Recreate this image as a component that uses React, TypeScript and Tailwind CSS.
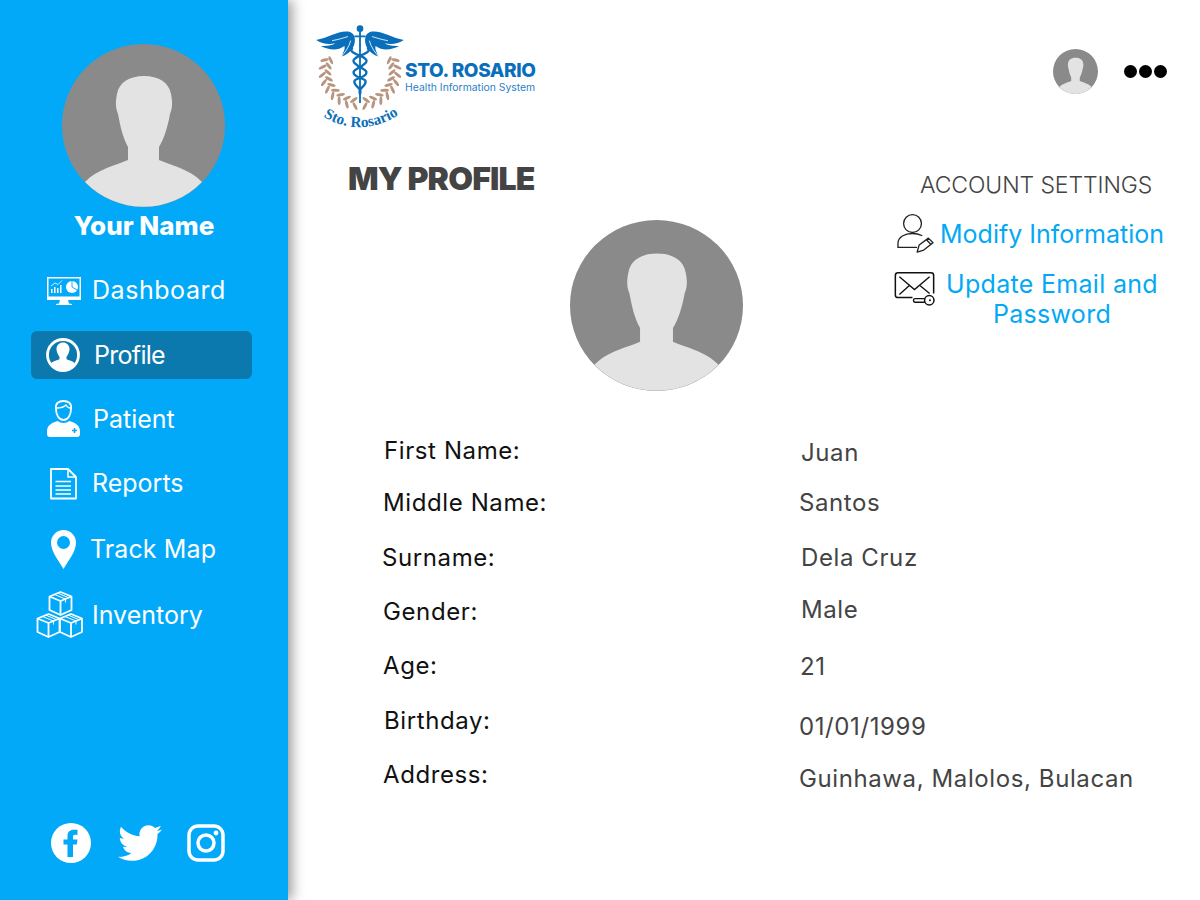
import { FaTwitter } from 'react-icons/fa'

const font = { fontFamily: 'Inter, "Liberation Sans", sans-serif' }

const Avatar = ({ className }: { className: string }) => (
    <svg viewBox="0 0 163 163" preserveAspectRatio="none" className={className}>
        <circle cx="81.5" cy="81.5" r="81.5" fill="#8a8a8a" />
        <path
            d="M23 138C35 125 55 121 66 116L66 103C60 92 58 80 56 70C54 65 53 60 55 50C57 38 68 32 82 32C96 32 107 38 109 50C111 60 110 65 108 70C106 82 102 95 97 103L97 116C108 121 128 125 140 138A81.5 81.5 0 0 1 23 138Z"
            fill="#e3e3e3"
        />
    </svg>
)

const DashboardIcon = () => (
    <svg viewBox="0 0 48 48" className="h-12 w-12 overflow-visible" fill="white">
        <path d="M8 11h34v23H8zM9.500 12.500v18h31v-18z" fillRule="evenodd" />
        <path d="M21 34h8l1 3.500 3 .5v1H17v-1l3-.5z" />
        <path d="M12 27v-4h1.500v4zM15 27v-6h1.500v6zM18 27v-5h1.500v5zM21 27v-8h1.500v8z" />
        <path d="M12 20l4-3 3 1.500 4-4" stroke="white" strokeWidth="0.8" fill="none" />
        <circle cx="33" cy="21" r="6" />
        <path d="M33 21v-6M33 21l5 3" stroke="#03a9f9" strokeWidth="0.9" />
    </svg>
)

const ProfileIcon = () => (
    <svg viewBox="0 0 48 48" className="h-12 w-12">
        <circle cx="24" cy="24" r="15.500" fill="none" stroke="white" strokeWidth="2.800" />
        <path
            d="M11.500 33C14 29.500 19 29.500 20.500 28V26C18.500 23 17.500 20.500 17.500 18C17.500 14 20.500 11.500 24 11.500S30.500 14 30.500 18C30.500 20.500 29.500 23 27.500 26V28C29 29.500 34 29.500 36.500 33C33 37 28.500 39 24 39S15 37 11.500 33Z"
            fill="white"
        />
    </svg>
)

const PatientIcon = () => (
    <svg viewBox="0 0 48 48" className="h-12 w-12">
        <path
            d="M17 14C16 8 20 6 24.500 6S33 8 32 14C32 20 29 25 24.500 25S17 20 17 14Z"
            fill="none"
            stroke="white"
            strokeWidth="1.800"
        />
        <path d="M17.500 13C21 13 25 12 27 10C28 12 30 13 31.500 13" fill="none" stroke="white" strokeWidth="1.300" />
        <path
            d="M19 26C21 28.500 28 28.500 30 26C35 27 41 30 41 36V39C41 41 40 42 38 42H11C9 42 8 41 8 39V36C8 30 14 27 19 26Z"
            fill="white"
        />
        <path d="M33 35.500h5M35.500 33v5" stroke="#03a9f9" strokeWidth="1.500" />
    </svg>
)

const ReportsIcon = () => (
    <svg viewBox="0 0 48 48" className="h-12 w-12" fill="none" stroke="white">
        <path d="M12 10H29L37 18V39.500H12Z" strokeWidth="1.800" strokeLinejoin="round" />
        <path d="M29 10V18H37" strokeWidth="1.500" />
        <path d="M16.500 22.500H32M16.500 27H32M16.500 31H32M16.500 35H32" strokeWidth="1.500" />
    </svg>
)

const PinIcon = () => (
    <svg viewBox="0 0 48 48" className="h-12 w-12">
        <path
            fillRule="evenodd"
            fill="white"
            d="M24.500 44C20 36 12 27 12 17.500A12.500 12.500 0 0 1 37 17.500C37 27 29 36 24.500 44ZM24.500 11A6.500 6.500 0 1 0 24.500 24A6.500 6.500 0 0 0 24.500 11Z"
        />
    </svg>
)

const InventoryIcon = () => (
    <svg viewBox="0 0 48 48" className="h-12 w-12 overflow-visible" fill="none" stroke="white" strokeWidth="1.800" strokeLinejoin="round">
        {[
            [10.500, 0],
            [-1.500, 22],
            [21, 22],
        ].map(([x, y]) => (
            <g key={`${x}-${y}`} transform={`translate(${x} ${y})`}>
                <path d="M0 5.500L11 1L22 5.500V19L11 24L0 19Z" fill="#03a9f9" />
                <path d="M0 5.500L11 10L22 5.500M11 10V24" />
                <path d="M5 3.500L16 8V11.500M8 2L18.500 6.500" strokeWidth="1" />
            </g>
        ))}
    </svg>
)

const navItems = [
    { label: 'Dashboard', icon: <DashboardIcon />, row: 'mt-0', text: 'ml-[5px] tracking-[0.55px]' },
    { label: 'Profile', icon: <ProfileIcon />, row: 'mt-[17px] rounded-md bg-[#0b79ad]', text: 'ml-[7px] tracking-[-0.7px]' },
    { label: 'Patient', icon: <PatientIcon />, row: 'mt-4', text: 'ml-[6px]' },
    { label: 'Reports', icon: <ReportsIcon />, row: 'mt-4', text: 'ml-[5px]' },
    { label: 'Track Map', icon: <PinIcon />, row: 'mt-[18px]', text: 'ml-[3px] tracking-[0.1px]' },
    { label: 'Inventory', icon: <InventoryIcon />, row: 'mt-[18px]', text: 'ml-[5px]' },
]

const details = [
    { label: 'First Name:', labelClass: 'mt-0 ml-[96px]', value: 'Juan', valueClass: 'mt-[2px] ml-[2px]' },
    { label: 'Middle Name:', labelClass: 'mt-5 ml-[95px]', value: 'Santos', valueClass: 'mt-[18px] ml-0' },
    { label: 'Surname:', labelClass: 'mt-[23px] ml-[94px]', value: 'Dela Cruz', valueClass: 'mt-[23px] ml-[2px]' },
    { label: 'Gender:', labelClass: 'mt-[22px] ml-[95px]', value: 'Male', valueClass: 'mt-5 ml-[2px]' },
    { label: 'Age:', labelClass: 'mt-[22px] ml-[95px]', value: '21', valueClass: 'mt-[25px] ml-[1px]' },
    { label: 'Birthday:', labelClass: 'mt-[23px] ml-[96px]', value: '01/01/1999', valueClass: 'mt-7 ml-0' },
    { label: 'Address:', labelClass: 'mt-[22px] ml-[95px]', value: 'Guinhawa, Malolos, Bulacan', valueClass: 'mt-5 ml-0' },
]

const leaves = [103, 116, 129, 142, 155, 168, 181, 194, 206]

const LogoMark = () => (
    <svg viewBox="45 25 270 325" className="h-[108px] w-[90px] shrink-0">
        {[false, true].map((flip) => (
            <g key={String(flip)} transform={flip ? 'translate(360 0) scale(-1 1)' : undefined}>
                <path
                    fill="#0a6fba"
                    d="M48 76C85 70 120 44 150 52C170 58 168 90 154 106C148 114 137 122 124 126C130 112 136 104 133 94C112 110 86 106 62 94C84 95 96 92 106 86C86 90 65 88 48 76Z"
                />
                <path d="M96 78C112 76 128 70 144 66M124 126C134 114 146 100 152 78" stroke="white" strokeWidth="2.500" fill="none" />
                {leaves.map((deg) => {
                    const rad = (deg * Math.PI) / 180
                    const x = 180 + Math.cos(rad) * 108
                    const y = 172 + Math.sin(rad) * 98
                    return (
                        <g key={deg} transform={`translate(${x} ${y}) rotate(${deg + 90})`}>
                            <ellipse cx="-5" cy="-11" rx="4.500" ry="13" transform="rotate(-40)" fill="#b8957f" />
                            <ellipse cx="5" cy="11" rx="4.500" ry="13" transform="rotate(40)" fill="#b8957f" />
                        </g>
                    )
                })}
            </g>
        ))}
        <circle cx="180" cy="42" r="10" fill="#0a6fba" />
        <path d="M180 50V266M163 65H197" stroke="#0a6fba" strokeWidth="5.500" />
        <path
            d="M158 100C135 118 215 125 197 145C177 165 153 165 163 180C175 195 207 190 194 210C185 222 175 225 180 240"
            fill="none"
            stroke="#0a6fba"
            strokeWidth="7"
        />
        <path
            d="M202 100C225 118 145 125 163 145C183 165 207 165 197 180C185 195 153 190 166 210C175 222 185 225 180 240"
            fill="none"
            stroke="#0a6fba"
            strokeWidth="7"
        />
        <path id="logo-arc" d="M66 305Q180 375 300 300" fill="none" />
        <text fill="#0a6fba" fontSize="46" fontWeight="700" fontFamily='"Liberation Serif", serif'>
            <textPath href="#logo-arc" startOffset="50%" textAnchor="middle">
                Sto. Rosario
            </textPath>
        </text>
    </svg>
)

const ModifyIcon = () => (
    <svg viewBox="40 145 125 130" className="h-[43px] w-[42px] shrink-0" fill="none" stroke="#222" strokeWidth="4">
        <circle cx="98" cy="180" r="27" />
        <path d="M54 252V240C54 220 75 210 98 210C108 210 118 212 126 216M54 252H110" strokeLinecap="round" />
        <path d="M112 266L118 245L146 224L160 238L132 260Z" strokeLinejoin="round" />
        <path d="M140 229L154 243" />
    </svg>
)

const MailKeyIcon = () => (
    <svg viewBox="40 318 125 104" className="h-[35px] w-[42px] shrink-0" fill="none" stroke="#111" strokeWidth="4.500">
        <path d="M95 397H52C47 397 44 394 44 389V331C44 326 47 323 52 323H150C155 323 158 326 158 331V385" />
        <path d="M56 335L101 373L146 335M56 388L85 362M146 385L118 362" strokeWidth="4" />
        <path d="M132 400H103C99 400 98 402 98 405C98 409 100 411 103 411H132" strokeWidth="4" />
        <circle cx="145" cy="405" r="14" />
        <circle cx="147" cy="405" r="3" fill="#111" stroke="none" />
    </svg>
)

const App = () => {
    return (
        <div className="flex h-[900px] w-[1200px] overflow-hidden bg-white" style={font}>
            <aside className="z-10 flex w-[288px] shrink-0 flex-col bg-[#03a9f9] shadow-[4px_0_12px_rgba(0,0,0,0.4)]">
                <Avatar className="mx-auto mt-11 ml-[62px] h-[163px] w-[163px]" />
                <div className="mt-[3px] text-center text-[26px] leading-8 font-extrabold text-white">Your Name</div>
                <nav className="mt-6 ml-[31px] flex w-[221px] flex-col">
                    {navItems.map((item) => (
                        <div key={item.label} className={`flex h-12 items-center ${item.row}`}>
                            <div className="w-14 shrink-0 pl-2">{item.icon}</div>
                            <span className={`pt-[2px] text-[25px] text-white ${item.text}`}>{item.label}</span>
                        </div>
                    ))}
                </nav>
                <div className="mt-[182px] ml-[51px] flex items-center text-white">
                    <svg viewBox="0 0 40 40" className="h-10 w-10">
                        <circle cx="20" cy="20" r="20" fill="white" />
                        <path
                            fill="#03a9f9"
                            d="M16.500 34V21.500H12.500V16.500H16.500V13C16.500 9 19 6.800 22.500 6.800H26.500V11.800H24C22.500 11.800 22 12.500 22 13.800V16.500H26.500L25.800 21.500H22V34Z"
                        />
                    </svg>
                    <FaTwitter size={44} className="ml-[27px]" />
                    <svg viewBox="0 0 38 38" className="ml-[25px] h-[38px] w-[38px]" fill="none" stroke="white" strokeWidth="3.500">
                        <rect x="2" y="2" width="34" height="34" rx="9" />
                        <circle cx="19" cy="19" r="8" />
                        <circle cx="29" cy="9" r="2.400" fill="white" stroke="none" />
                    </svg>
                </div>
            </aside>

            <main className="flex flex-1 flex-col">
                <header className="flex h-[153px] justify-between">
                    <div className="mt-[23px] ml-[27px] flex">
                        <LogoMark />
                        <div className="mt-[37px] ml-0">
                            <div className="text-[19px] leading-[22px] font-extrabold tracking-[-0.4px] text-[#0a6fba]">
                                STO. ROSARIO
                            </div>
                            <div className="text-[10.400px] leading-3 text-[#2a80c8]">Health Information System</div>
                        </div>
                    </div>
                    <div className="mt-[49px] mr-[33px] flex items-start">
                        <Avatar className="h-[45px] w-[45px]" />
                        <div className="mt-4 ml-[26px] flex gap-[2px]">
                            <div className="h-[13px] w-[13px] rounded-full bg-black" />
                            <div className="h-[13px] w-[13px] rounded-full bg-black" />
                            <div className="h-[13px] w-[13px] rounded-full bg-black" />
                        </div>
                    </div>
                </header>

                <section className="flex h-[239px]">
                    <div className="w-[600px] shrink-0">
                        <h1 className="mt-[6px] ml-[60px] text-[32px] leading-10 font-black tracking-[-0.8px] text-[#444]">
                            MY PROFILE
                        </h1>
                        <Avatar className="mt-[21px] ml-[282px] h-[171px] w-[173px]" />
                    </div>
                    <div className="mt-4 flex w-[290px] flex-col">
                        <div className="ml-8 text-[23px] leading-8 font-light tracking-[-0.1px] text-[#444]">
                            ACCOUNT SETTINGS
                        </div>
                        <div className="mt-[11px] ml-[5px] flex items-center text-[25px] leading-[34px] text-[#03a9f4]">
                            <ModifyIcon />
                            <span className="ml-[5px]">Modify Information</span>
                        </div>
                        <div className="mt-[14px] flex items-start text-[25px] leading-[30px] tracking-[0.3px] text-[#03a9f4]">
                            <div className="mt-[2px] ml-[6px]">
                                <MailKeyIcon />
                            </div>
                            <span className="w-[232px] text-center">Update Email and Password</span>
                        </div>
                    </div>
                </section>

                <section className="mt-[43px] flex text-[24px] leading-8 tracking-[0.6px]">
                    <div className="flex w-[510px] shrink-0 flex-col text-[#111]">
                        {details.map((row) => (
                            <div key={row.label} className={row.labelClass}>
                                {row.label}
                            </div>
                        ))}
                    </div>
                    <div className="ml-[1px] flex flex-col text-[#444]">
                        {details.map((row) => (
                            <div key={row.label} className={`whitespace-nowrap ${row.valueClass}`}>
                                {row.value}
                            </div>
                        ))}
                    </div>
                </section>
            </main>
        </div>
    )
}

export default App
